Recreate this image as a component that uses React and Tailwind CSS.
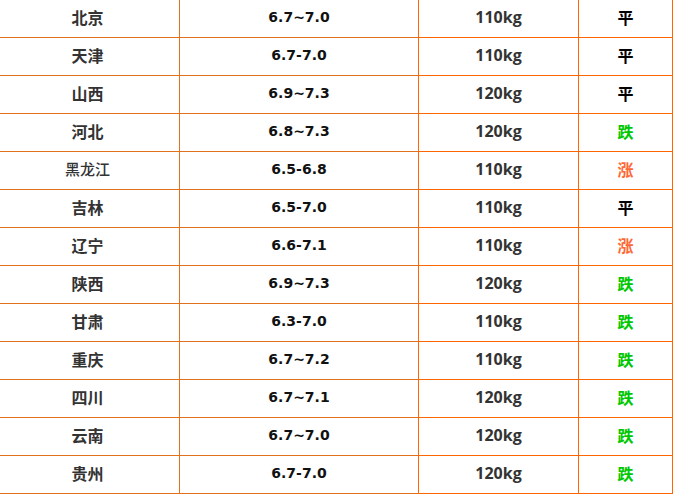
import React from "react";

const rows = [
  ["北京", "6.7~7.0", "110kg", "平"],
  ["天津", "6.7-7.0", "110kg", "平"],
  ["山西", "6.9~7.3", "120kg", "平"],
  ["河北", "6.8~7.3", "120kg", "跌"],
  ["黑龙江", "6.5-6.8", "110kg", "涨"],
  ["吉林", "6.5-7.0", "110kg", "平"],
  ["辽宁", "6.6-7.1", "110kg", "涨"],
  ["陕西", "6.9~7.3", "120kg", "跌"],
  ["甘肃", "6.3-7.0", "110kg", "跌"],
  ["重庆", "6.7~7.2", "110kg", "跌"],
  ["四川", "6.7~7.1", "120kg", "跌"],
  ["云南", "6.7~7.0", "120kg", "跌"],
  ["贵州", "6.7-7.0", "120kg", "跌"],
];

function trendClass(t) {
  if (t === "跌") return "text-[#00c800]";
  if (t === "涨") return "text-[#ff6633]";
  return "text-black";
}

export default function App() {
  return (
    <div className="w-[673px] h-[494px] overflow-hidden bg-white">
      <div className="ml-[-4px] w-[677px] flex flex-col">
        {rows.map((r, i) => (
          <div key={i} className="flex h-[38px]">
            <div
              className={`w-[184px] flex items-center justify-center pb-[3px] border-r border-b border-[#e2711d] text-[#333] font-['Noto_Sans_CJK_SC','Noto_Sans',sans-serif] ${
                r[0].length > 2 ? "text-[15px] font-medium" : "text-[16px] font-bold"
              }`}
            >
              {r[0]}
            </div>
            <div className="w-[239px] flex items-center justify-center pb-[2px] border-r border-b border-r-[#ff6600] border-b-[#e2711d] text-[14px] font-bold text-[#111] font-['DejaVu_Sans',Verdana,sans-serif]">
              {r[1]}
            </div>
            <div className="w-[160px] flex items-center justify-center pb-[3px] border-r border-b border-[#ff6600] text-[16px] font-bold text-[#333] font-['Open_Sans','Noto_Sans',sans-serif]">
              {r[2]}
            </div>
            <div
              className={`w-[94px] flex items-center justify-center pb-[3px] border-r border-b border-[#ff6600] text-[16px] font-bold font-['Noto_Sans_CJK_SC','Noto_Sans',sans-serif] ${trendClass(
                r[3]
              )}`}
            >
              {r[3]}
            </div>
          </div>
        ))}
      </div>
    </div>
  );
}
